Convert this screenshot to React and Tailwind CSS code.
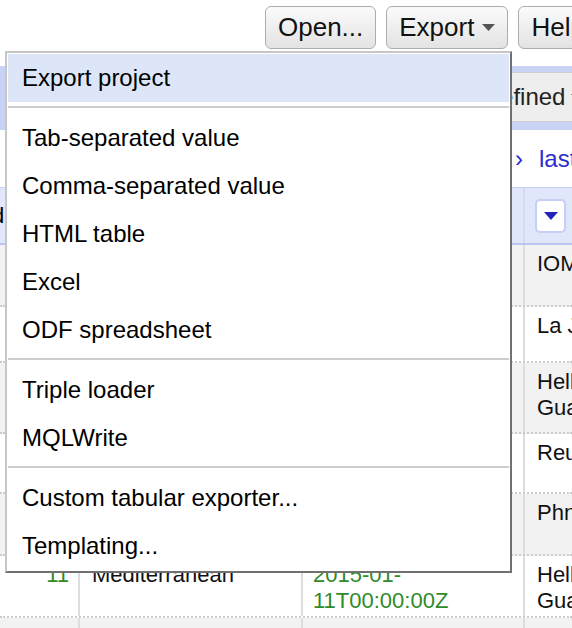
import React from 'react';

// Toolbar buttons across the top
const ToolButton = ({ children }) => (
    <button
        type="button"
        className="shrink-0 h-[43px] px-[12px] flex items-center gap-[8px] rounded-[6px] border border-[#adadad] bg-linear-to-b from-[#fbfbfb] to-[#e3e3e3] text-[26px] text-[#111] whitespace-nowrap"
    >
        {children}
    </button>
);

const menuGroups = [
    ['Tab-separated value', 'Comma-separated value', 'HTML table', 'Excel', 'ODF spreadsheet'],
    ['Triple loader', 'MQLWrite'],
    ['Custom tabular exporter...', 'Templating...'],
];

const rows = [
    { h: 'h-[62px]', bg: 'bg-[#f2f2f2]', id: '6', name: 'Mediterranean', date: ['2015-01-', '06T00:00:00Z'], org: ['IOM'] },
    { h: 'h-[56px]', bg: 'bg-white', id: '7', name: 'Mediterranean', date: ['2015-01-', '07T00:00:00Z'], org: ['La Jolla'] },
    { h: 'h-[71px]', bg: 'bg-[#f2f2f2]', id: '8', name: 'Mediterranean', date: ['2015-01-', '08T00:00:00Z'], org: ['Hellenic', 'Guard'] },
    { h: 'h-[60px]', bg: 'bg-white', id: '9', name: 'Mediterranean', date: ['2015-01-', '09T00:00:00Z'], org: ['Reuters'] },
    { h: 'h-[62px]', bg: 'bg-[#f2f2f2]', id: '10', name: 'Mediterranean', date: ['2015-01-', '10T00:00:00Z'], org: ['Phnom Penh'] },
    { h: 'h-[62px]', bg: 'bg-white', id: '11', name: 'Mediterranean', date: ['2015-01-', '11T00:00:00Z'], org: ['Hellenic', 'Guard'] },
    { h: 'h-[62px]', bg: 'bg-[#f2f2f2]', id: '12', name: 'Mediterranean', date: ['2015-01-', '12T00:00:00Z'], org: ['Hellenic', 'Guard'] },
];

const ExportMenu = () => (
    <div className="absolute left-[5px] top-[51px] w-[507px] border-2 border-t-[#c6c6c6] border-l-[#c6c6c6] border-r-[#707070] border-b-[#707070] bg-white p-[1px] text-[24px] text-black">
        <div className="h-[48px] flex items-center pl-[14px] bg-[#dce6f8] whitespace-nowrap">Export project</div>
        {menuGroups.map((group, gi) => (
            <div key={gi}>
                <div className="h-[2px] mt-[4px] mb-[6px] bg-[#cccccc]" />
                {group.map((label) => (
                    <div key={label} className="h-[48px] flex items-center pl-[14px] whitespace-nowrap">
                        {label}
                    </div>
                ))}
            </div>
        ))}
    </div>
);

export default function App() {
    return (
        <div className="relative w-[572px] h-[628px] overflow-hidden bg-white font-['Liberation_Sans',Arial,sans-serif]">
            {/* top toolbar */}
            <div className="flex h-[66px] items-start gap-[10px] pl-[265px] pt-[6px] overflow-hidden">
                <ToolButton>Open...</ToolButton>
                <ToolButton>
                    Export
                    <svg width="13" height="7" viewBox="0 0 13 7"><path d="M0 0h13L6.5 7z" fill="#555" /></svg>
                </ToolButton>
                <ToolButton>Help</ToolButton>
            </div>

            {/* blue band with view selector */}
            <div className="flex h-[64px] items-start pl-[440px] pt-[6px] bg-[#c9d3f6] overflow-hidden">
                <div className="shrink-0 h-[50px] flex items-center gap-[6px] px-[15px] rounded-[4px] border border-[#cfcfcf] bg-[#eeeeee] text-[24px] text-[#222] whitespace-nowrap">
                    Undefined
                    <svg width="12" height="7" viewBox="0 0 12 7"><path d="M0 0h12L6 7z" fill="#555" /></svg>
                </div>
            </div>

            {/* pager */}
            <div className="flex h-[57px] items-center gap-[16px] pl-[515px] text-[24px] text-[#2c2cd0] whitespace-nowrap overflow-hidden">
                <span>›</span>
                <span>last »</span>
            </div>

            {/* header row */}
            <div className="flex h-[58px] bg-[#e1e7fb] border-t border-b-2 border-t-[#c8d0ef] border-b-[#bac6f1] text-[22px]">
                <div className="w-[80px] shrink-0 flex items-center border-r-2 border-[#d3daf2] overflow-hidden">
                    <span className="-ml-[8px] whitespace-nowrap">d</span>
                </div>
                <div className="w-[223px] shrink-0 border-r-2 border-[#d3daf2]" />
                <div className="w-[222px] shrink-0 border-r-2 border-[#d3daf2]" />
                <div className="flex-1 flex items-center pl-[10px]">
                    <div className="w-[31px] h-[34px] flex items-center justify-center rounded-[5px] border-2 border-[#c3cff3] bg-white">
                        <svg width="14" height="8" viewBox="0 0 14 8"><path d="M0 0h14L7 8z" fill="#2323b8" /></svg>
                    </div>
                </div>
            </div>

            {/* data rows */}
            {rows.map((r) => (
                <div key={r.id} className={`flex ${r.h} ${r.bg} border-b-2 border-dotted border-[#cccccc] text-[22px] leading-[26px] text-[#111]`}>
                    <div className="w-[80px] shrink-0 pt-[6px] pr-[9px] text-right text-[#2f8a2a] border-r-2 border-solid border-[#dddddd]">{r.id}</div>
                    <div className="w-[223px] shrink-0 pt-[6px] pl-[12px] whitespace-nowrap border-r-2 border-solid border-[#dddddd]">{r.name}</div>
                    <div className="w-[222px] shrink-0 pt-[6px] pl-[10px] text-[#2f8a2a] whitespace-nowrap border-r-2 border-solid border-[#dddddd]">
                        {r.date.map((d) => <div key={d}>{d}</div>)}
                    </div>
                    <div className="flex-1 pt-[6px] pl-[12px] whitespace-nowrap">
                        {r.org.map((o) => <div key={o}>{o}</div>)}
                    </div>
                </div>
            ))}

            <ExportMenu />
        </div>
    );
}
